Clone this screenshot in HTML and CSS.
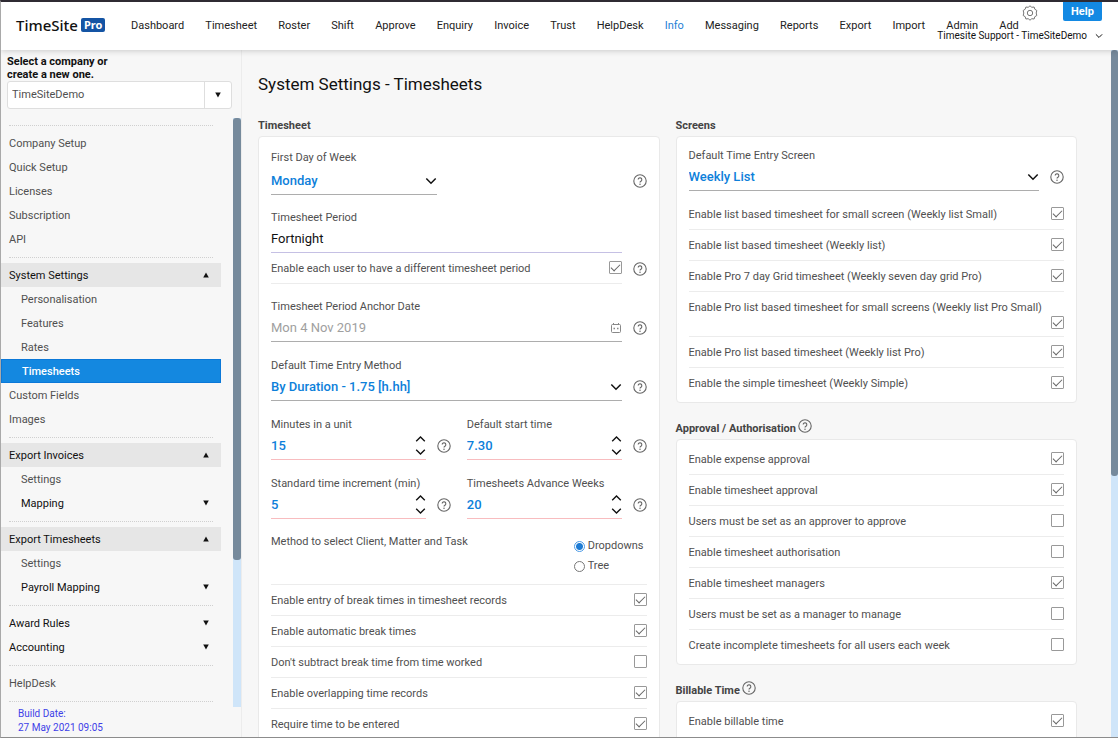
FILE: index.html
```html
<!DOCTYPE html>
<html lang="en">
<head>
<meta charset="utf-8">
<title>System Settings - Timesheets</title>
<link rel="stylesheet" href="styles.css">
</head>
<body>
<svg class="sprite" aria-hidden="true">
  <symbol id="help" viewBox="0 0 14 14"><circle cx="7" cy="7" r="6.2" fill="none" stroke="currentColor" stroke-width="1.1"/><path d="M5.2 5.6a1.8 1.8 0 1 1 2.7 1.6c-.6.4-.9.7-.9 1.4" fill="none" stroke="currentColor" stroke-width="1.1"/><circle cx="7" cy="10.2" r=".75" fill="currentColor"/></symbol>
  <symbol id="down" viewBox="0 0 12 8"><path d="M1.3 1.5 6 6.2l4.700-4.700" fill="none" stroke="currentColor" stroke-width="1.5"/></symbol>
  <symbol id="up" viewBox="0 0 12 8"><path d="M1.300 6.500 6 1.800l4.700 4.700" fill="none" stroke="currentColor" stroke-width="1.5"/></symbol>
  <symbol id="tri-up" viewBox="0 0 6 6"><path d="M3 .5 5.800 5.500H.2z" fill="currentColor"/></symbol>
  <symbol id="tri-down" viewBox="0 0 6 6"><path d="M3 5.500 5.800.5H.2z" fill="currentColor"/></symbol>
</svg>

<header class="topbar">
  <a class="logo" href="#"><span>TimeSite</span><b>Pro</b></a>
  <nav class="mainnav">
    <a href="#">Dashboard</a><a href="#">Timesheet</a><a href="#">Roster</a><a href="#">Shift</a><a href="#">Approve</a><a href="#">Enquiry</a><a href="#">Invoice</a><a href="#">Trust</a><a href="#">HelpDesk</a><a href="#" class="current">Info</a><a href="#">Messaging</a><a href="#">Reports</a><a href="#">Export</a><a href="#">Import</a><a href="#">Admin</a><a href="#">Add</a>
  </nav>
  <div class="tools">
    <button class="gear" type="button" aria-label="Settings"><svg viewBox="0 0 16 16" fill="none" stroke="currentColor"><circle cx="8" cy="8" r="2.700"/><path d="M8 .8 9.800 2.300l2.300-.3.700 2.200 2 1.300L14.200 8l.6 2.500-2 1.200-.7 2.300-2.300-.3L8 15.200l-1.800-1.500-2.300.3-.7-2.300-2-1.200L1.800 8l-.6-2.500 2-1.300.7-2.200 2.300.3z" stroke-linejoin="round"/></svg></button>
    <button class="help-tab" type="button">Help</button>
  </div>
  <button class="account" type="button">Timesite Support - TimeSiteDemo<svg><use href="#down"/></svg></button>
</header>

<div class="shell">
  <aside class="sidebar">
    <div class="company">
      <label for="company">Select a company or<br>create a new one.</label>
      <div class="combo">
        <input id="company" type="text" value="TimeSiteDemo">
        <button type="button" aria-label="Show companies"><svg><use href="#tri-down"/></svg></button>
      </div>
    </div>
    <div class="side-scroll">
      <nav class="menu">
        <hr>
        <a href="#">Company Setup</a>
        <a href="#">Quick Setup</a>
        <a href="#">Licenses</a>
        <a href="#">Subscription</a>
        <a href="#">API</a>
        <hr>
        <a href="#" class="parent open">System Settings<svg><use href="#tri-up"/></svg></a>
        <a href="#" class="sub">Personalisation</a>
        <a href="#" class="sub">Features</a>
        <a href="#" class="sub">Rates</a>
        <a href="#" class="sub selected">Timesheets</a>
        <a href="#">Custom Fields</a>
        <a href="#">Images</a>
        <hr>
        <a href="#" class="parent open">Export Invoices<svg><use href="#tri-up"/></svg></a>
        <a href="#" class="sub">Settings</a>
        <a href="#" class="sub parent">Mapping<svg><use href="#tri-down"/></svg></a>
        <hr>
        <a href="#" class="parent open">Export Timesheets<svg><use href="#tri-up"/></svg></a>
        <a href="#" class="sub">Settings</a>
        <a href="#" class="sub parent">Payroll Mapping<svg><use href="#tri-down"/></svg></a>
        <hr>
        <a href="#" class="parent">Award Rules<svg><use href="#tri-down"/></svg></a>
        <a href="#" class="parent">Accounting<svg><use href="#tri-down"/></svg></a>
        <hr>
        <a href="#">HelpDesk</a>
        <hr>
      </nav>
      <div class="track side-track" aria-hidden="true"><div class="thumb"></div></div>
    </div>
    <p class="build">Build Date:<br>27 May 2021 09:05</p>
  </aside>

  <main class="content">
    <h1>System Settings - Timesheets</h1>
    <div class="columns">
      <div class="column">
        <h2>Timesheet</h2>
        <section class="card card-fields">
          <div class="field field-first">
            <label for="first-day">First Day of Week</label>
            <div class="line">
              <div class="control short"><select id="first-day"><option>Monday</option></select><svg class="chev"><use href="#down"/></svg></div>
              <button class="help" type="button" aria-label="Help"><svg><use href="#help"/></svg></button>
            </div>
          </div>
          <div class="field">
            <label for="period">Timesheet Period</label>
            <div class="line"><div class="control violet"><input id="period" class="dark" type="text" value="Fortnight"></div><span class="help"></span></div>
            <div class="line">
              <div class="row"><label for="c0">Enable each user to have a different timesheet period</label><input type="checkbox" id="c0" checked></div>
              <button class="help" type="button" aria-label="Help"><svg><use href="#help"/></svg></button>
            </div>
          </div>
          <div class="field">
            <label for="anchor">Timesheet Period Anchor Date</label>
            <div class="line">
              <div class="control"><input id="anchor" type="text" value="Mon 4 Nov 2019" disabled><svg class="calendar" viewBox="0 0 12 12" fill="none" stroke="currentColor"><rect x="1.500" y="2.500" width="9" height="8" rx="1"/><path d="M3.500 1v1.500M8.500 1v1.500"/><path d="M3.500 6.500h1.500M7 6.500h1.500" stroke-width="1.500"/></svg></div>
              <button class="help" type="button" aria-label="Help"><svg><use href="#help"/></svg></button>
            </div>
          </div>
          <div class="field">
            <label for="method">Default Time Entry Method</label>
            <div class="line">
              <div class="control"><select id="method"><option>By Duration - 1.75 [h.hh]</option></select><svg class="chev"><use href="#down"/></svg></div>
              <button class="help" type="button" aria-label="Help"><svg><use href="#help"/></svg></button>
            </div>
          </div>
          <div class="pair">
            <div class="field">
              <label for="minutes">Minutes in a unit</label>
              <div class="line">
                <div class="control pink"><input id="minutes" type="text" value="15"><span class="spin"><button type="button" aria-label="Increase"><svg><use href="#up"/></svg></button><button type="button" aria-label="Decrease"><svg><use href="#down"/></svg></button></span></div>
                <button class="help" type="button" aria-label="Help"><svg><use href="#help"/></svg></button>
              </div>
            </div>
            <div class="field">
              <label for="start">Default start time</label>
              <div class="line">
                <div class="control pink"><input id="start" type="text" value="7.30"><span class="spin"><button type="button" aria-label="Increase"><svg><use href="#up"/></svg></button><button type="button" aria-label="Decrease"><svg><use href="#down"/></svg></button></span></div>
                <button class="help" type="button" aria-label="Help"><svg><use href="#help"/></svg></button>
              </div>
            </div>
            <div class="field">
              <label for="increment">Standard time increment (min)</label>
              <div class="line">
                <div class="control pink"><input id="increment" type="text" value="5"><span class="spin"><button type="button" aria-label="Increase"><svg><use href="#up"/></svg></button><button type="button" aria-label="Decrease"><svg><use href="#down"/></svg></button></span></div>
                <button class="help" type="button" aria-label="Help"><svg><use href="#help"/></svg></button>
              </div>
            </div>
            <div class="field">
              <label for="advance">Timesheets Advance Weeks</label>
              <div class="line">
                <div class="control pink"><input id="advance" type="text" value="20"><span class="spin"><button type="button" aria-label="Increase"><svg><use href="#up"/></svg></button><button type="button" aria-label="Decrease"><svg><use href="#down"/></svg></button></span></div>
                <button class="help" type="button" aria-label="Help"><svg><use href="#help"/></svg></button>
              </div>
            </div>
          </div>
          <div class="choice" role="radiogroup" aria-labelledby="select-method">
            <span id="select-method">Method to select Client, Matter and Task</span>
            <div class="radios">
              <label><input type="radio" name="tree" checked>Dropdowns</label>
              <label><input type="radio" name="tree">Tree</label>
            </div>
          </div>
          <div class="row"><label for="c1">Enable entry of break times in timesheet records</label><input type="checkbox" id="c1" checked></div>
          <div class="row"><label for="c2">Enable automatic break times</label><input type="checkbox" id="c2" checked></div>
          <div class="row"><label for="c3">Don't subtract break time from time worked</label><input type="checkbox" id="c3"></div>
          <div class="row"><label for="c4">Enable overlapping time records</label><input type="checkbox" id="c4" checked></div>
          <div class="row"><label for="c5">Require time to be entered</label><input type="checkbox" id="c5" checked></div>
        </section>
      </div>

      <div class="column">
        <h2>Screens</h2>
        <section class="card card-screens">
          <div class="field">
            <label for="screen">Default Time Entry Screen</label>
            <div class="line">
              <div class="control"><select id="screen"><option>Weekly List</option></select><svg class="chev"><use href="#down"/></svg></div>
              <button class="help" type="button" aria-label="Help"><svg><use href="#help"/></svg></button>
            </div>
          </div>
          <div class="row"><label for="s1">Enable list based timesheet for small screen (Weekly list Small)</label><input type="checkbox" id="s1" checked></div>
          <div class="row"><label for="s2">Enable list based timesheet (Weekly list)</label><input type="checkbox" id="s2" checked></div>
          <div class="row"><label for="s3">Enable Pro 7 day Grid timesheet (Weekly seven day grid Pro)</label><input type="checkbox" id="s3" checked></div>
          <div class="row stacked"><label for="s4">Enable Pro list based timesheet for small screens (Weekly list Pro Small)</label><input type="checkbox" id="s4" checked></div>
          <div class="row"><label for="s5">Enable Pro list based timesheet (Weekly list Pro)</label><input type="checkbox" id="s5" checked></div>
          <div class="row"><label for="s6">Enable the simple timesheet (Weekly Simple)</label><input type="checkbox" id="s6" checked></div>
        </section>

        <h2>Approval / Authorisation<button class="help" type="button" aria-label="Help"><svg><use href="#help"/></svg></button></h2>
        <section class="card">
          <div class="row"><label for="a1">Enable expense approval</label><input type="checkbox" id="a1" checked></div>
          <div class="row"><label for="a2">Enable timesheet approval</label><input type="checkbox" id="a2" checked></div>
          <div class="row"><label for="a3">Users must be set as an approver to approve</label><input type="checkbox" id="a3"></div>
          <div class="row"><label for="a4">Enable timesheet authorisation</label><input type="checkbox" id="a4"></div>
          <div class="row"><label for="a5">Enable timesheet managers</label><input type="checkbox" id="a5" checked></div>
          <div class="row"><label for="a6">Users must be set as a manager to manage</label><input type="checkbox" id="a6"></div>
          <div class="row"><label for="a7">Create incomplete timesheets for all users each week</label><input type="checkbox" id="a7"></div>
        </section>

        <h2>Billable Time<button class="help" type="button" aria-label="Help"><svg><use href="#help"/></svg></button></h2>
        <section class="card">
          <div class="row"><label for="b1">Enable billable time</label><input type="checkbox" id="b1" checked></div>
        </section>
      </div>
    </div>
  </main>
  <div class="track" aria-hidden="true"><div class="thumb"></div></div>
</div>
</body>
</html>
```
FILE: styles.css
```css
* { box-sizing: border-box; }

body {
  margin: 0;
  height: 100vh;
  overflow: hidden;
  display: flex;
  flex-direction: column;
  border-top: 2px solid #2f2b33;
  border-left: 1px solid #a9a9a9;
  border-bottom: 1px solid #8c8c8c;
  background: #f7f7f7;
  color: #505050;
  font: 11px/16px Roboto, "Liberation Sans", sans-serif;
}

.sprite { display: none; }

a { color: inherit; text-decoration: none; }

button, input, select {
  margin: 0;
  padding: 0;
  border: 0;
  background: none;
  color: inherit;
  font: inherit;
  appearance: none;
}

svg { display: block; flex: none; }

/* Top bar */
.topbar {
  position: relative;
  z-index: 1;
  flex: none;
  display: flex;
  height: 48px;
  padding: 0 16px 0 15px;
  background: #fff;
  box-shadow: 0 1px 6px rgba(0, 0, 0, .18);
  color: #222;
}

.logo {
  width: 115px;
  display: flex;
  align-items: center;
  gap: 3px;
  height: 46px;
  color: #111;
  font: 500 15px/16px "Noto Sans", sans-serif;
}

.logo b {
  padding: 0 3px;
  border-radius: 2px;
  background: #1454a4;
  color: #fff;
  font: 700 11px/14px "Noto Sans", sans-serif;
}

.mainnav {
  flex: 1;
  display: flex;
  justify-content: space-between;
  align-items: center;
  height: 48px;
}

.mainnav .current { color: #1f7fd6; }

.tools {
  width: 83px;
  display: flex;
  justify-content: space-between;
  align-items: flex-start;
  padding-left: 3px;
}

.gear { margin-top: 3px; color: #777; }
.gear svg { width: 16px; height: 16px; }

.help-tab {
  width: 39px;
  height: 19px;
  border-radius: 0 0 2px 2px;
  background: #1389e3;
  color: #fff;
  font-weight: 700;
}

.account {
  position: absolute;
  right: 15px;
  bottom: 7px;
  display: flex;
  align-items: center;
  gap: 8px;
  color: #111;
  font-size: 10px;
  line-height: 14px;
}

.account svg { width: 8px; height: 6px; }

/* Page frame */
.shell { flex: 1; min-height: 0; display: flex; }

.sidebar {
  flex: none;
  width: 241px;
  border-right: 1px solid #ececec;
}

.company { padding: 5px 9px 9px 6px; }

.company label {
  display: block;
  color: #111;
  font-weight: 700;
  line-height: 13px;
}

.combo {
  display: flex;
  height: 28px;
  border: 1px solid #dedede;
  border-radius: 3px;
  background: #fff;
}

.combo input { flex: 1; min-width: 0; padding-left: 4px; }

.combo button {
  display: grid;
  place-items: center;
  width: 27px;
  border-left: 1px solid #dedede;
  color: #111;
}

.combo svg, .menu svg { width: 6px; height: 6px; }

.side-scroll { display: flex; justify-content: space-between; }

.menu { width: 220px; padding-top: 1px; }

.menu hr {
  height: 1px;
  margin: 6px 8px 5px 8px;
  border: 0;
  border-top: 1px dotted #d0d0d0;
}

.menu a {
  display: flex;
  align-items: center;
  justify-content: space-between;
  height: 24px;
  padding: 2px 12px 0 8px;
}

.menu .sub { padding-left: 20px; }
.menu .parent { color: #111; }
.menu .parent svg { margin-bottom: 2px; }
.menu .open { background: #e6e6e6; }

.menu .selected {
  border: 1px solid #0b78d8;
  background: #1488e0;
  color: #fff;
  font-weight: 500;
}

.build {
  margin: 0;
  padding-left: 17px;
  color: #3f3fe8;
  font-size: 10px;
  line-height: 14px;
}

/* Scroll bars */
.track { flex: none; width: 7px; background: #cfe5f9; }
.track .thumb { height: 62%; border-radius: 3px; background: #768a9c; }
.side-track { width: 8px; }
.side-track .thumb { height: 75%; }

/* Content */
.content { flex: 1; min-width: 0; padding: 22px 34px 0 16px; }

h1 {
  margin: 0;
  color: #111;
  font-size: 17px;
  font-weight: 400;
  line-height: 24px;
}

h2 {
  display: flex;
  align-items: center;
  gap: 2px;
  margin: 14px 0 0;
  padding-top: 2px;
  color: #444;
  font-size: 11px;
  font-weight: 700;
  line-height: 20px;
}

h2 .help { padding-bottom: 6px; }

.columns {
  display: grid;
  grid-template-columns: repeat(2, minmax(0, 1fr));
  gap: 16px;
  padding-top: 4px;
}

.card {
  padding: 4px 12px 3px;
  border: 1px solid #e9e9e9;
  border-radius: 4px;
  background: #fff;
}

.card-fields { padding-top: 12px; }
.card-screens { padding-top: 10px; }
.card-screens .field { margin-bottom: 8px; }

.field > label { display: block; padding-top: 1px; margin-bottom: -1px; }
.card-fields > .field { margin-bottom: 14px; }
.card-fields > .field:nth-child(n + 3) { margin-bottom: 15px; }

.line { display: flex; align-items: center; gap: 11px; }
.field-first .line { padding-top: 2px; justify-content: space-between; }

.control {
  flex: 1;
  min-width: 0;
  display: flex;
  align-items: center;
  height: 28px;
  border-bottom: 1px solid #adadad;
}

.control.short { flex: none; width: 166px; }
.control.violet { border-color: #c5c0e4; }
.control.pink { border-color: #f8bcbf; }

.control input, .control select {
  flex: 1;
  min-width: 0;
  height: 100%;
  color: #0d80da;
  font-size: 13px;
  font-weight: 500;
}

.control input:disabled { color: #a0a0a0; font-weight: 400; }
.control .dark { color: #111; font-weight: 400; }

.chev { width: 12px; height: 8px; margin-left: -12px; color: #111; pointer-events: none; }
.calendar { width: 12px; height: 12px; color: #888; }

.spin { display: grid; gap: 5px; color: #111; }
.spin svg { width: 11px; height: 8px; }

.help { flex: none; width: 14px; color: #666; }
.help svg { width: 14px; height: 14px; }

.pair {
  display: grid;
  grid-template-columns: repeat(2, minmax(0, 1fr));
  gap: 15px 16px;
  margin-bottom: 15px;
}

.choice {
  display: flex;
  justify-content: space-between;
  height: 51px;
  border-bottom: 1px solid #ececec;
}

.radios { display: grid; gap: 4px; align-content: start; padding: 4px 3px 0 0; }
.radios label { display: flex; align-items: center; gap: 3px; }

input[type="radio"] {
  width: 11px;
  height: 11px;
  border: 1px solid #777;
  border-radius: 50%;
}

input[type="radio"]:checked {
  border-color: #4a9ae6;
  background: radial-gradient(circle, #1d7bd4 0 3px, #fff 4px);
}

/* Tick box rows */
.row {
  flex: 1;
  display: flex;
  align-items: center;
  justify-content: space-between;
  height: 31px;
  border-bottom: 1px solid #ececec;
}

.row label { padding-top: 2px; }
.row input { margin-bottom: 2px; }

.card > .row:last-child { border-bottom-color: transparent; }

.stacked {
  flex-direction: column;
  align-items: flex-end;
  height: 45px;
  padding: 6px 0 7px;
}

.stacked label { width: 100%; white-space: nowrap; }

input[type="checkbox"] {
  flex: none;
  display: grid;
  place-items: center;
  width: 13px;
  height: 13px;
  border: 1px solid #999;
  border-radius: 1px;
}

input[type="checkbox"]:checked::before {
  content: "";
  width: 8px;
  height: 4px;
  margin-bottom: 2px;
  border: solid #666;
  border-width: 0 0 1px 1px;
  transform: rotate(-45deg);
}
```
